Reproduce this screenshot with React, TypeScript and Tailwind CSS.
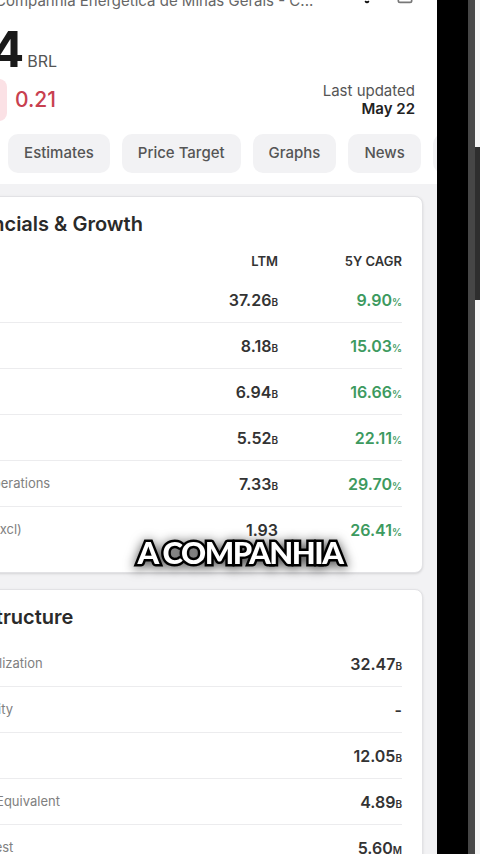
import { Bell, ChevronLeft, Share } from "lucide-react";

interface Metric {
  label: string;
  ltm: string;
  ltmUnit?: string;
  cagr: string;
}

interface StructureRow {
  label: string;
  value: string;
  unit?: string;
}

const FINANCIALS: Metric[] = [
  { label: "Total Revenue", ltm: "37.26", ltmUnit: "B", cagr: "9.90" },
  { label: "Gross Profit", ltm: "8.18", ltmUnit: "B", cagr: "15.03" },
  { label: "EBITDA", ltm: "6.94", ltmUnit: "B", cagr: "16.66" },
  { label: "Net Income", ltm: "5.52", ltmUnit: "B", cagr: "22.11" },
  { label: "Cash From Operations", ltm: "7.33", ltmUnit: "B", cagr: "29.70" },
  { label: "Diluted EPS (excl)", ltm: "1.93", cagr: "26.41" },
];

const STRUCTURE: StructureRow[] = [
  { label: "Market Capitalization", value: "32.47", unit: "B" },
  { label: "Preferred Equity", value: "-" },
  { label: "Total Debt", value: "12.05", unit: "B" },
  { label: "Less: Cash & Equivalent", value: "4.89", unit: "B" },
  { label: "Minority Interest", value: "5.60", unit: "M" },
];

const TABS = ["Overview", "Estimates", "Price Target", "Graphs", "News", "Ratings"];

function Value({ n, unit, className = "text-[#333]" }: { n: string; unit?: string; className?: string }) {
  return (
    <span className={`text-[16px] font-semibold ${className}`}>
      {n}
      {unit && <span className="text-[10px] font-semibold">{unit}</span>}
    </span>
  );
}

export default function App() {
  return (
    <div className="relative flex h-[854px] w-[480px] overflow-hidden bg-black font-['Inter',sans-serif]">
      {/* phone screen, cropped on the left */}
      <div className="h-full w-[437px] shrink-0 overflow-hidden bg-[#f2f2f4]">
        <div className="ml-[-122px] w-[559px]">
          {/* Header */}
          <div className="bg-white px-[16px] pb-[11px] pr-[22px]">
            <div className="mt-[-30px] flex h-[40px] items-end">
              <ChevronLeft className="mb-[4px] h-[24px] w-[24px] shrink-0 text-[#222]" />
              <div className="ml-[12px] h-[40px] w-[40px] shrink-0 rounded-full bg-[#1b5e3a]" />
              <div className="ml-[25px] flex min-w-0 flex-col">
                <span className="text-[18px] font-bold leading-[22px] text-[#111]">CIG</span>
                <span className="whitespace-nowrap text-[15px] leading-[18px] text-[#666]">
                  Companhia Energética de Minas Gerais - C...
                </span>
              </div>
              <div className="ml-auto flex items-end gap-[18px] pb-[6px]">
                <Bell className="h-[20px] w-[20px] fill-[#111] text-[#111]" />
                <Share className="h-[20px] w-[20px] text-[#777]" />
              </div>
            </div>

            <div className="ml-[-4px] mt-[14px] flex items-baseline gap-[3px]">
              <span className="text-[50px] font-bold leading-none text-[#1a1a1a]">12.24</span>
              <span className="text-[16px] text-[#555]">BRL</span>
            </div>

            <div className="mt-[5px] flex items-center">
              <div className="flex h-[42px] w-[113px] shrink-0 items-center justify-center rounded-lg bg-[#fbe1e5] text-[16px] font-medium text-[#c8404f]">
                -1.83%
              </div>
              <span className="ml-[8px] text-[21px] font-medium text-[#c8404f]">0.21</span>
              <div className="ml-auto flex flex-col items-end">
                <span className="text-[15px] leading-[18px] text-[#555]">Last updated</span>
                <span className="text-[15px] font-semibold leading-[18px] text-[#222]">May 22</span>
              </div>
            </div>

            <div className="ml-[2px] mt-[13px] flex gap-[12px]">
              {TABS.map((t) => (
                <div
                  key={t}
                  className="flex h-[39px] shrink-0 items-center rounded-[10px] bg-[#f2f2f4] px-[16px] text-[15px] font-medium text-[#555]"
                >
                  {t}
                </div>
              ))}
            </div>
          </div>

          {/* Cards */}
          <div className="flex flex-col gap-[16px] px-[14px] pt-[12px]">
            <div className="rounded-lg border border-[#e2e2e5] bg-white px-[20px] pb-[19px] pt-[14px] shadow-sm">
              <h2 className="ml-[-3px] text-[20px] font-semibold leading-[26px] text-[#2a2a2a]">Key Financials &amp; Growth</h2>
              <div className="flex h-[40px] items-center pt-[10px] text-[13px] font-semibold text-[#333]">
                <span className="flex-1" />
                <span className="w-[100px] text-right">LTM</span>
                <span className="w-[124px] text-right">5Y CAGR</span>
              </div>
              {FINANCIALS.map((m, i) => (
                <div
                  key={m.label}
                  className={`flex h-[46px] items-center ${i < FINANCIALS.length - 1 ? "border-b border-[#ececee]" : ""}`}
                >
                  <span className="flex-1 text-[13px] text-[#808080]">{m.label}</span>
                  <span className="w-[100px] text-right">
                    <Value n={m.ltm} unit={m.ltmUnit} />
                  </span>
                  <span className="w-[124px] text-right">
                    <Value n={m.cagr} unit="%" className="text-[#3d9a5f]" />
                  </span>
                </div>
              ))}
            </div>

            <div className="rounded-lg border border-[#e2e2e5] bg-white px-[20px] pb-[19px] pt-[14px] shadow-sm">
              <h2 className="ml-[-3px] text-[20px] font-semibold leading-[26px] text-[#2a2a2a]">Capital Structure</h2>
              <div className="mt-[11px]">
                {STRUCTURE.map((r) => (
                  <div key={r.label} className="flex h-[46px] items-center border-b border-[#ececee]">
                    <span className="flex-1 text-[13px] text-[#808080]">{r.label}</span>
                    <Value n={r.value} unit={r.unit} />
                  </div>
                ))}
              </div>
            </div>
          </div>
        </div>
      </div>

      {/* phone frame */}
      <div className="w-[31px] shrink-0 bg-black" />
      <div className="w-[7px] shrink-0 bg-[#464646]" />
      <div className="flex w-[5px] shrink-0 flex-col">
        <div className="h-[147px] bg-[#f4f4f4]" />
        <div className="h-[153px] bg-[#2e2e2e]" />
        <div className="flex-1 bg-[#f4f4f4]" />
      </div>

      {/* caption */}
      <div className="absolute left-0 top-[529px] w-[480px] text-center">
        <span className="font-['Lato',sans-serif] text-[31px] font-black uppercase tracking-[-1.5px] text-white drop-shadow-[0_2px_6px_rgba(0,0,0,0.7)] [-webkit-text-stroke:5px_#000] [paint-order:stroke_fill]">
          A Companhia
        </span>
      </div>
    </div>
  );
}
